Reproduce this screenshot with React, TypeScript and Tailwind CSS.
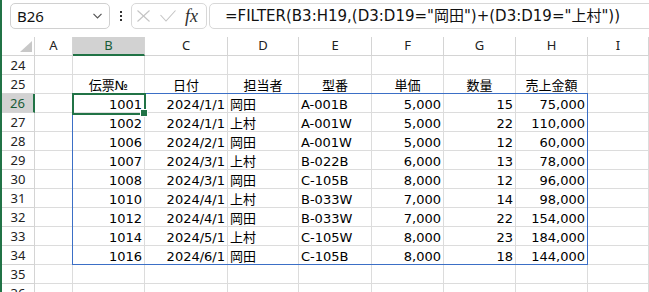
const cols = ["A", "B", "C", "D", "E", "F", "G", "H", "I"];
const heads = ["伝票№", "日付", "担当者", "型番", "単価", "数量", "売上金額"];

const data: string[][] = [
    ["1001", "2024/1/1", "岡田", "A-001B", "5,000", "15", "75,000"],
    ["1002", "2024/1/1", "上村", "A-001W", "5,000", "22", "110,000"],
    ["1006", "2024/2/1", "岡田", "A-001W", "5,000", "12", "60,000"],
    ["1007", "2024/3/1", "上村", "B-022B", "6,000", "13", "78,000"],
    ["1008", "2024/3/1", "岡田", "C-105B", "8,000", "12", "96,000"],
    ["1010", "2024/4/1", "上村", "B-033W", "7,000", "14", "98,000"],
    ["1012", "2024/4/1", "岡田", "B-033W", "7,000", "22", "154,000"],
    ["1014", "2024/5/1", "上村", "C-105W", "8,000", "23", "184,000"],
    ["1016", "2024/6/1", "岡田", "C-105B", "8,000", "18", "144,000"],
];

// D and E are text columns, the rest are numbers/dates
const leftCols = [2, 3];

const rowNums = [24, 25, 26, 27, 28, 29, 30, 31, 32, 33, 34, 35, 36];

function TopBar() {
    return (
        <div className="flex items-start h-[37px] pl-[8px] pt-[3px] font-['Noto_Sans',sans-serif]">
            <div className="w-[100px] h-[26px] shrink-0 border border-[#d0d0d0] rounded-[5px] flex items-center justify-between pl-[6px] pr-[7px]">
                <span className="text-[15px] leading-none text-[#111]">B26</span>
                <svg width="9" height="6" viewBox="0 0 9 6">
                    <polyline points="0.5,0.8 4.5,4.8 8.5,0.8" fill="none" stroke="#555" strokeWidth="1.2" />
                </svg>
            </div>
            <div className="ml-[10px] mt-[8px] flex flex-col gap-[2px] shrink-0">
                <span className="w-[2px] h-[2px] bg-[#333]"></span>
                <span className="w-[2px] h-[2px] bg-[#333]"></span>
                <span className="w-[2px] h-[2px] bg-[#333]"></span>
            </div>
            <div className="ml-[9px] w-[76px] h-[26px] shrink-0 border border-[#d8d8d8] rounded-[5px] flex items-center pl-[5px]">
                <svg width="13" height="12" viewBox="0 0 13 12">
                    <line x1="0.5" y1="0.5" x2="12.5" y2="11.5" stroke="#c4c4c4" strokeWidth="1.1" />
                    <line x1="12.5" y1="0.5" x2="0.5" y2="11.5" stroke="#c4c4c4" strokeWidth="1.1" />
                </svg>
                <svg className="ml-[10px]" width="16" height="12" viewBox="0 0 16 12">
                    <polyline points="0.5,5 6,11 15.5,0.5" fill="none" stroke="#c4c4c4" strokeWidth="1.1" />
                </svg>
                <span className="ml-[9px] font-['Liberation_Serif',serif] italic text-[18px] leading-none text-[#2e2e2e]">fx</span>
            </div>
            <div className="ml-[2px] h-[26px] flex-1 -mr-[20px] border border-[#d8d8d8] rounded-[5px] flex items-center pl-[15px]">
                <span className="text-[15px] leading-none text-[#111] whitespace-nowrap font-['DejaVu_Sans','Noto_Sans_CJK_JP',sans-serif]">
                    =FILTER(B3:H19,(D3:D19="岡田")+(D3:D19="上村"))
                </span>
            </div>
        </div>
    );
}

function Cell({ text, align }: { text?: string; align: "left" | "right" | "center" }) {
    const j = align === "left" ? "justify-start pl-[2px]" : align === "right" ? "justify-end pr-[2px]" : "justify-center";
    return (
        <div className={`flex items-end ${j} border-r border-b border-[#dcdcdc] pb-[1px] text-[13px] leading-[12px] text-black whitespace-nowrap overflow-visible`}>
            {text}
        </div>
    );
}

function Sheet() {
    return (
        <div className="relative">
            <div className="grid grid-cols-[33px_38px_72px_83px_71px_73px_72px_72px_72px_1fr] auto-rows-[19px] font-['DejaVu_Sans','Noto_Sans_CJK_JP',sans-serif]">
                <div className="relative border-r border-b border-[#d4d4d4] bg-white">
                    <svg className="absolute right-[2px] bottom-[3px]" width="12" height="11" viewBox="0 0 12 11">
                        <polygon points="12,0 12,11 0,11" fill="#c8c8c8" />
                    </svg>
                </div>
                {cols.map((c) => (
                    <div
                        key={c}
                        className={
                            c === "B"
                                ? "flex items-center justify-center bg-[#d2d2d2] border-r border-[#d4d4d4] border-b-2 border-b-[#217346] text-[13px] text-[#185c37] font-['Noto_Sans',sans-serif]"
                                : "flex items-center justify-center bg-white border-r border-b border-[#d4d4d4] text-[13px] text-[#222] font-['Noto_Sans',sans-serif]"
                        }
                    >
                        {c}
                    </div>
                ))}
                {rowNums.map((r) => {
                    const d = r >= 26 && r <= 34 ? data[r - 26] : null;
                    return [
                        <div
                            key={"h" + r}
                            className={
                                r === 26
                                    ? "flex items-center justify-center pt-[1px] bg-[#d2d2d2] border-b border-[#d4d4d4] border-r-2 border-r-[#217346] text-[13px] text-[#185c37] font-['Noto_Sans',sans-serif]"
                                    : "flex items-center justify-center pt-[1px] bg-white border-r border-b border-[#d4d4d4] text-[13px] text-[#222] font-['Noto_Sans',sans-serif]"
                            }
                        >
                            {r}
                        </div>,
                        ...cols.map((c, ci) => {
                            const k = ci - 1;
                            if (r === 25 && k >= 0 && k < 7) return <Cell key={c + r} text={heads[k]} align="center" />;
                            if (d && k >= 0 && k < 7) return <Cell key={c + r} text={d[k]} align={leftCols.includes(k) ? "left" : "right"} />;
                            return <Cell key={c + r} align="left" />;
                        }),
                    ];
                })}
            </div>
            {/* spill range */}
            <div className="absolute left-[70px] top-[56px] w-[516px] h-[172px] border border-[#3b6fc6] pointer-events-none"></div>
            {/* active cell */}
            <div className="absolute left-[70px] top-[56px] w-[74px] h-[22px] border-2 border-[#217346] pointer-events-none"></div>
            <div className="absolute left-[138px] top-[72px] w-[8px] h-[8px] bg-[#217346] border border-white"></div>
        </div>
    );
}

export default function App() {
    return (
        <div className="w-[649px] h-[292px] overflow-hidden bg-white border-l-2 border-[#217346]">
            <TopBar />
            <Sheet />
        </div>
    );
}
